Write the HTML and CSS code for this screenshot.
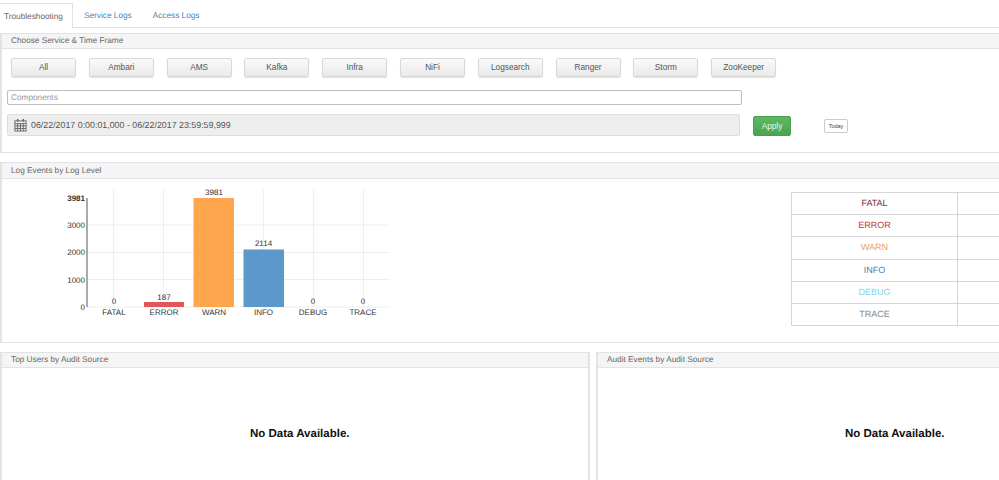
FILE: index.html
```html
<!DOCTYPE html>
<html lang="en">
<head>
<meta charset="utf-8">
<title>Troubleshooting</title>
<link rel="stylesheet" href="styles.css">
</head>
<body>
<nav class="tabs">
  <a class="tab tab-active">Troubleshooting</a>
  <a class="tab">Service Logs</a>
  <a class="tab">Access Logs</a>
</nav>
<section class="panel panel-filter">
  <h2 class="panel-head">Choose Service &amp; Time Frame</h2>
  <div class="filter-body">
    <div class="services">
      <button class="svc">All</button>
      <button class="svc">Ambari</button>
      <button class="svc">AMS</button>
      <button class="svc">Kafka</button>
      <button class="svc">Infra</button>
      <button class="svc">NiFi</button>
      <button class="svc">Logsearch</button>
      <button class="svc">Ranger</button>
      <button class="svc">Storm</button>
      <button class="svc">ZooKeeper</button>
    </div>
    <div class="components">Components</div>
    <div class="time-row">
      <div class="date-range">
        <svg class="cal" width="13" height="14" viewBox="0 0 14 14" fill="none" stroke="#666" stroke-width="1">
          <rect x="1" y="2.500" width="12" height="11" fill="#eee"/>
          <path d="M1 5.500h12M1 8h12M1 10.800h12M4 5.500v8M7 5.500v8M10 5.500v8"/>
          <path d="M4 0.500v3M10 0.500v3" stroke-width="1.600"/>
        </svg>
        <span>06/22/2017 0:00:01,000 - 06/22/2017 23:59:59,999</span>
      </div>
      <button class="apply">Apply</button>
      <button class="today">Today</button>
    </div>
  </div>
</section>
<section class="panel panel-events">
  <h2 class="panel-head">Log Events by Log Level</h2>
  <div class="events-body">
    <svg class="chart" width="400" height="148" viewBox="0 178 400 148">
      <g class="grid">
        <path d="M113.500 190V307M163.500 190V307M213.500 190V307M263.500 190V307M313.500 190V307M363.500 190V307"/>
        <path d="M88 225H390M88 252.500H390M88 279.500H390M88 307H390"/>
      </g>
      <rect x="144" y="302" width="40" height="5" fill="#e2555b"/>
      <rect x="193.500" y="198" width="40.500" height="109" fill="#fda64d"/>
      <rect x="243.500" y="249.500" width="40.500" height="57.500" fill="#5c98c9"/>
      <path class="axis" d="M87 198V307"/>
      <g class="y-labels">
        <text x="85" y="201" class="top">3981</text>
        <text x="85" y="228">3000</text>
        <text x="85" y="255">2000</text>
        <text x="85" y="283">1000</text>
        <text x="85" y="310">0</text>
      </g>
      <g class="values">
        <text x="114" y="304">0</text>
        <text x="164" y="300">187</text>
        <text x="214" y="195">3981</text>
        <text x="263.500" y="246">2114</text>
        <text x="313" y="304">0</text>
        <text x="363" y="304">0</text>
      </g>
      <g class="x-labels">
        <text x="114" y="315">FATAL</text>
        <text x="164" y="315">ERROR</text>
        <text x="214" y="315">WARN</text>
        <text x="263.500" y="315">INFO</text>
        <text x="313" y="315">DEBUG</text>
        <text x="363" y="315">TRACE</text>
      </g>
    </svg>
    <table class="levels">
      <tr><td class="lv fatal">FATAL</td><td></td></tr>
      <tr><td class="lv error">ERROR</td><td></td></tr>
      <tr><td class="lv warn">WARN</td><td></td></tr>
      <tr><td class="lv info">INFO</td><td></td></tr>
      <tr><td class="lv debug">DEBUG</td><td></td></tr>
      <tr><td class="lv trace">TRACE</td><td></td></tr>
    </table>
  </div>
</section>
<div class="audit-row">
  <section class="panel panel-audit panel-users">
    <h2 class="panel-head">Top Users by Audit Source</h2>
    <div class="no-data">No Data Available.</div>
  </section>
  <section class="panel panel-audit panel-sources">
    <h2 class="panel-head">Audit Events by Audit Source</h2>
    <div class="no-data">No Data Available.</div>
  </section>
</div>
</body>
</html>
```
FILE: styles.css
```css
* { box-sizing: border-box; }
html, body { height: 480px; overflow: hidden; }
body {
  margin: 0;
  width: 999px;
  background: #fff;
  font-family: "Liberation Sans", Arial, sans-serif;
  font-size: 9px;
  color: #555;
  text-rendering: geometricPrecision;
}
.tabs {
  display: flex;
  height: 25px;
  margin-top: 3px;
  border-bottom: 1px solid #e2e2e2;
  align-items: flex-start;
}
.tab {
  padding: 7px 10px 0 11px;
  font-size: 8.250px;
  line-height: 11px;
  color: #4f83b5;
}
.tab-active {
  width: 73px;
  height: 25px;
  padding: 7px 0 0 4px;
  color: #666;
  background: #fff;
  border: 1px solid #e2e2e2;
  border-left: 0;
  border-bottom: 0;
}
.panel {
  border: 1px solid #e3e3e3;
  border-left-width: 2px;
  border-right: 0;
  background: #fff;
}
.panel-head {
  margin: 0;
  height: 15px;
  padding-left: 9px;
  background: #f5f5f5;
  border-bottom: 1px solid #e3e3e3;
  font-size: 8.250px;
  font-weight: 400;
  line-height: 14px;
  color: #666;
}
.panel-filter { height: 120px; margin-top: 5px; }
.filter-body { padding: 9px 0 0 5px; }
.services { display: flex; gap: 12.800px; padding-left: 4px; }
.svc {
  width: 65px;
  height: 19px;
  padding: 0;
  border: 1px solid #d8d8d8;
  border-radius: 2px;
  background: linear-gradient(#fafafa, #e9e9e9);
  box-shadow: 0 1px 1px rgba(0, 0, 0, .12);
  font: 8.250px "Liberation Sans", Arial, sans-serif;
  color: #555;
}
.components {
  width: 735px;
  height: 15px;
  margin-top: 13px;
  padding-left: 3px;
  border: 1px solid #bdbdbd;
  border-radius: 2px;
  font-size: 8.250px;
  line-height: 13px;
  color: #999;
}
.time-row { display: flex; align-items: center; margin-top: 9px; }
.date-range {
  display: flex;
  align-items: center;
  gap: 4px;
  width: 733px;
  height: 22px;
  padding-left: 6px;
  background: #eee;
  border: 1px solid #ddd;
  border-radius: 2px;
  font-size: 8.850px;
  color: #555;
}
.cal { flex: none; }
.apply {
  width: 38px;
  height: 20px;
  margin-left: 13px;
  margin-top: 2px;
  padding: 0;
  border: 1px solid #4a9e4f;
  border-radius: 2px;
  background: linear-gradient(#5cb860, #4aa551);
  font: 8.250px "Liberation Sans", Arial, sans-serif;
  color: #eef7ee;
}
.today {
  width: 24px;
  height: 14px;
  margin-left: 33px;
  margin-top: 2px;
  padding: 0;
  border: 1px solid #ccc;
  border-radius: 2px;
  background: #fff;
  font: 5.500px "Liberation Sans", Arial, sans-serif;
  color: #444;
}
.panel-events { height: 181px; margin-top: 9px; }
.panel-events .panel-head { height: 16px; line-height: 16px; }
.events-body { display: flex; align-items: flex-start; }
.chart { flex: none; margin: -1px 0 0 -2px; display: block; }
.grid path { stroke: #eeeeee; stroke-width: 1; fill: none; }
.axis { stroke: #aaa; stroke-width: 2; fill: none; }
.chart text { font-family: "Liberation Sans", Arial, sans-serif; font-size: 8px; fill: #333; }
.y-labels text { text-anchor: end; font-size: 8px; fill: #333; }
.y-labels .top { font-weight: 700; }
.values text, .x-labels text { text-anchor: middle; }
.levels {
  margin: 13px 0 0 391px;
  width: 208px;
  flex: none;
  border-collapse: collapse;
  table-layout: fixed;
  font-size: 9px;
}
.levels td { height: 22.200px; padding: 0 0 1px; border: 1px solid #d6d6d6; border-right: 0; text-align: center; }
.lv { width: 166px; }
.levels .lv { border-right: 1px solid #d6d6d6; }
.fatal { color: #7a2f35; }
.error { color: #b5424a; }
.warn { color: #e8a465; }
.info { color: #4f83b5; }
.debug { color: #7fd3e6; }
.trace { color: #888; }
.audit-row { display: flex; gap: 6px; margin-top: 9px; }
.panel-audit { height: 140px; }
.panel-users { width: 590px; border-right: 2px solid #e3e3e3; }
.panel-sources { width: 403px; }
.no-data {
  margin-top: 59px;
  padding-left: 248px;
  font-size: 11.500px;
  font-weight: 700;
  color: #111;
  line-height: 14px;
}
.panel-sources .no-data { padding-left: 247px; }
```
